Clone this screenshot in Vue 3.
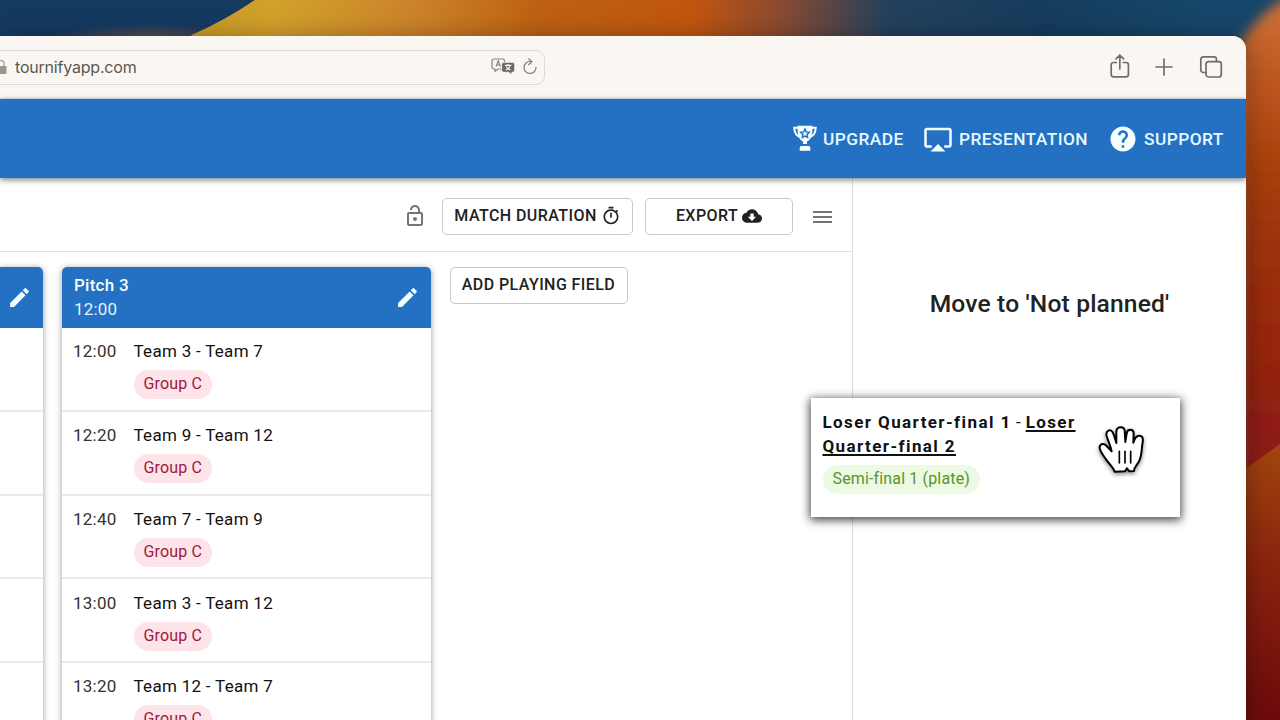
<script setup>
const matches = [
  { time: '12:00', teams: 'Team 3 - Team 7' },
  { time: '12:20', teams: 'Team 9 - Team 12' },
  { time: '12:40', teams: 'Team 7 - Team 9' },
  { time: '13:00', teams: 'Team 3 - Team 12' },
  { time: '13:20', teams: 'Team 12 - Team 7' },
]
const pencil = 'M3 17.25V21h3.75L17.81 9.94l-3.75-3.75L3 17.25zM20.71 7.04c.39-.39.39-1.02 0-1.41l-2.34-2.34c-.39-.39-1.02-.39-1.41 0l-1.83 1.83 3.75 3.75 1.83-1.83z'
</script>

<template>
  <div class="desktop">
    <svg class="wallpaper" viewBox="0 0 1280 720" width="1280" height="720" aria-hidden="true">
      <defs>
        <linearGradient id="top" x1="190" x2="1280" y1="0" y2="0" gradientUnits="userSpaceOnUse">
          <stop offset="0" stop-color="#c99a25" />
          <stop offset=".08" stop-color="#d2a02b" />
          <stop offset=".2" stop-color="#cc842a" />
          <stop offset=".32" stop-color="#bd6112" />
          <stop offset=".46" stop-color="#c0560f" />
          <stop offset=".54" stop-color="#8b4a30" />
          <stop offset=".64" stop-color="#24405c" />
          <stop offset=".78" stop-color="#153c5c" />
          <stop offset=".93" stop-color="#17466a" />
          <stop offset="1" stop-color="#17466a" />
        </linearGradient>
        <linearGradient id="side" x1="0" x2="0" y1="0" y2="1">
          <stop offset="0" stop-color="#cf7438" />
          <stop offset=".12" stop-color="#bd5722" />
          <stop offset=".25" stop-color="#a63d08" />
          <stop offset=".4" stop-color="#9a2c0b" />
          <stop offset=".62" stop-color="#8c1b15" />
        </linearGradient>
        <linearGradient id="low" x1="0" x2="0" y1="0" y2="1">
          <stop offset="0" stop-color="#a0460f" />
          <stop offset=".4" stop-color="#8c260e" />
          <stop offset="1" stop-color="#6b0a0b" />
        </linearGradient>
        <radialGradient id="glow"><stop offset="0" stop-color="#8a5a45" stop-opacity=".7" /><stop offset="1" stop-color="#8a5a45" stop-opacity="0" /></radialGradient>
        <filter id="soft"><feGaussianBlur stdDeviation="6" /></filter>
      </defs>
      <rect width="1280" height="60" fill="url(#top)" />
      <path d="M0 0H255Q226 20 192 35L170 60H0Z" fill="#153a60" />
      <ellipse cx="150" cy="40" rx="100" ry="16" fill="url(#glow)" />
      <path d="M255 0Q226 20 192 35L170 60H300V0Z" fill="url(#top)" />
      <path d="M1300 -10Q1262 8 1238 46V740H1300Z" fill="url(#side)" filter="url(#soft)" />
      <path d="M1246 468.500L1280 444V720H1246Z" fill="url(#low)" />
    </svg>

    <div class="window">
      <div class="browser">
        <div class="address">
          <svg class="lock" width="12" height="18" viewBox="0 0 12 18"><path d="M3 8V5.500a3 3 0 0 1 6 0V8" fill="none" stroke="#aaa7a2" stroke-width="1.400" /><rect x="1" y="8" width="10.500" height="8" rx="1.300" fill="#99958f" /></svg>
          <span class="host">tournifyapp.com</span>
          <svg class="translate" width="24" height="18" viewBox="0 0 24 18">
            <path d="M3 1h8.500a2 2 0 0 1 2 2v6a2 2 0 0 1-2 2H7l-3 2.300V11H3a2 2 0 0 1-2-2V3a2 2 0 0 1 2-2Z" fill="none" stroke="#85817b" stroke-width="1.200" />
            <path d="m5 8.600 2.200-5.600 2.200 5.600M5.700 7h3" fill="none" stroke="#85817b" stroke-width="1.200" />
            <path d="M12.800 4.300h8.700a2.200 2.200 0 0 1 2.200 2.200v5.600a2.200 2.200 0 0 1-2.200 2.200h-.7v2.600l-3-2.600h-5a2.200 2.200 0 0 1-2.200-2.200V6.500a2.200 2.200 0 0 1 2.200-2.200Z" fill="#6d6963" stroke="#faf7f2" stroke-width=".8" />
            <path d="M14 7.400h6.500M17.200 6v1.400M15 12q3.700-1.800 4.200-4.500M15.300 8.500q1 2.500 4.200 3.600" fill="none" stroke="#faf7f2" stroke-width="1.100" />
          </svg>
          <svg class="reload" width="16" height="18" viewBox="0 0 16 18"><path d="M8.500 3.500A6 6 0 1 0 14 9.400M6.700.8l3.200 2.900-3.300 3" fill="none" stroke="#85817b" stroke-width="1.250" stroke-linecap="round" /></svg>
        </div>
        <div class="tools">
          <svg width="22" height="26" viewBox="0 0 22 26"><path d="M7.300 9.500H4.500a2.300 2.300 0 0 0-2.300 2.300v9.700a2.300 2.300 0 0 0 2.300 2.300h12.600a2.300 2.300 0 0 0 2.300-2.300v-9.700a2.300 2.300 0 0 0-2.300-2.300h-2.800M10.800 16V2.200M7 5.800l3.800-3.700 3.800 3.700" /></svg>
          <svg width="18" height="18" viewBox="0 0 18 18"><path d="M9 1v16M1 9h16" /></svg>
          <svg width="24" height="24" viewBox="0 0 24 24"><path d="M7 17.500H4.300A2.500 2.500 0 0 1 1.800 15V4.300a2.500 2.500 0 0 1 2.500-2.500H15a2.500 2.500 0 0 1 2.500 2.500V6.500" /><rect x="7" y="6.700" width="15.300" height="15.300" rx="2.500" /></svg>
        </div>
      </div>

      <header class="appbar">
        <a class="nav upgrade">
          <svg width="24" height="27" viewBox="0 0 24 27">
            <path d="M5.500 2.800H1.200Q1.700 11.200 8 12.200M18.500 2.800h4.300Q22.300 11.200 16 12.200" fill="none" stroke="currentColor" stroke-width="2" />
            <path d="M4.500.8h15Q20 14.500 14 16.500V19h-4v-2.500Q4 14.500 4.500.8ZM8.300 21h7.400q1.600 0 1.600 1.600v3.200H6.700v-3.200Q6.700 21 8.300 21Z" fill="currentColor" />
            <path d="m12 4.200 1.300 2.700 3 .4-2.200 2.100.5 3-2.600-1.400-2.600 1.400.5-3-2.200-2.100 3-.4Z" fill="none" stroke="#2470c3" stroke-width="1.500" />
          </svg><span>UPGRADE</span>
        </a>
        <a class="nav presentation">
          <svg width="30" height="30" viewBox="0 0 24 24"><path fill="currentColor" d="M6 22h12l-6-6zM21 3H3c-1.100 0-2 .9-2 2v12c0 1.100.9 2 2 2h4v-2H3V5h18v12h-4v2h4c1.100 0 2-.9 2-2V5c0-1.100-.9-2-2-2z" /></svg><span>PRESENTATION</span>
        </a>
        <a class="nav support">
          <svg width="30" height="30" viewBox="0 0 24 24"><path fill="currentColor" d="M12 2C6.480 2 2 6.480 2 12s4.480 10 10 10 10-4.480 10-10S17.520 2 12 2zm1 17h-2v-2h2v2zm2.070-7.750l-.9.920C13.450 12.900 13 13.500 13 15h-2v-.5c0-1.100.45-2.100 1.170-2.830l1.240-1.260c.37-.36.59-.86.59-1.410 0-1.100-.9-2-2-2s-2 .9-2 2H8c0-2.210 1.790-4 4-4s4 1.790 4 4c0 .88-.36 1.680-.93 2.250z" /></svg><span>SUPPORT</span>
        </a>
      </header>

      <main class="content">
        <section class="board">
          <div class="toolbar">
            <svg class="unlock" width="24" height="24" viewBox="0 0 24 24"><path fill="#757575" d="M12 17c1.100 0 2-.9 2-2s-.9-2-2-2-2 .9-2 2 .9 2 2 2zm6-9h-1V6c0-2.760-2.240-5-5-5S7 3.240 7 6h1.900c0-1.710 1.390-3.100 3.100-3.100s3.100 1.390 3.100 3.100v2H6c-1.100 0-2 .9-2 2v10c0 1.100.9 2 2 2h12c1.100 0 2-.9 2-2V10c0-1.100-.9-2-2-2zm0 12H6V10h12v10z" /></svg>
            <button class="btn duration"><span>MATCH DURATION</span><svg width="20" height="20" viewBox="0 0 24 24"><path fill="currentColor" d="M15 1H9v2h6V1zm-4 13h2V8h-2v6zm8.030-6.610l1.420-1.420c-.43-.51-.9-.99-1.410-1.410l-1.420 1.420C16.070 4.740 14.120 4 12 4c-4.970 0-9 4.030-9 9s4.020 9 9 9 9-4.030 9-9c0-2.120-.74-4.070-1.970-5.610zM12 20c-3.870 0-7-3.130-7-7s3.130-7 7-7 7 3.130 7 7-3.130 7-7 7z" /></svg></button>
            <button class="btn export"><span>EXPORT</span><svg width="20" height="20" viewBox="0 0 24 24"><path fill="currentColor" d="M19.350 10.040C18.670 6.590 15.640 4 12 4 9.110 4 6.600 5.640 5.350 8.040 2.340 8.360 0 10.910 0 14c0 3.310 2.690 6 6 6h13c2.760 0 5-2.240 5-5 0-2.640-2.050-4.780-4.650-4.960zM17 13l-5 5-5-5h3V9h4v4h3z" /></svg></button>
            <svg class="menu" width="19" height="14" viewBox="0 0 19 14"><path d="M0 2h19M0 7h19M0 12h19" stroke="#757575" stroke-width="1.800" /></svg>
          </div>
          <div class="fields">
            <article class="field partial">
              <div class="field-head"><svg class="edit" width="25" height="25" viewBox="0 0 24 24"><path fill="currentColor" :d="pencil" /></svg></div>
              <div v-for="m in matches" :key="m.time" class="match"></div>
            </article>
            <article class="field">
              <div class="field-head">
                <div><div class="pitch">Pitch 3</div><div class="start">12:00</div></div>
                <svg class="edit" width="25" height="25" viewBox="0 0 24 24"><path fill="currentColor" :d="pencil" /></svg>
              </div>
              <div v-for="m in matches" :key="m.time" class="match">
                <div class="time">{{ m.time }}</div>
                <div><div class="teams">{{ m.teams }}</div><span class="chip group">Group C</span></div>
              </div>
            </article>
            <button class="btn add"><span>ADD PLAYING FIELD</span></button>
          </div>
        </section>
        <aside class="unplanned">Move to 'Not planned'</aside>
      </main>
    </div>

    <div class="drag">
      <div class="line"><b>Loser Quarter-final 1</b><i> - </i><b><u>Loser</u></b></div>
      <div class="line"><b><u>Quarter-final 2</u></b></div>
      <span class="chip semi">Semi-final 1 (plate)</span>
    </div>
    <svg class="hand" width="80" height="80" viewBox="0 0 240 240">
      <path d="M104 185C100 172 86 160 78 148C70 136 57 122 59 110C62 100 73 99 80 108L95 124C92 108 84 92 80 78C76 62 91 54 98 67C103 76 106 90 109 99L109 66C109 48 133 47 134 62L136 96L140 70C142 55 161 56 161 70L160 98C163 88 167 80 174 78C187 75 190 84 188 96C184 120 186 136 178 152C172 166 162 170 162 183L148 184L141 175L135 184Z" fill="#fff" stroke="#000" stroke-width="6" stroke-linejoin="round" />
      <path d="M118 124v35M135 124v35M152 124v35" stroke="#000" stroke-width="5" stroke-linecap="round" />
    </svg>
  </div>
</template>

<style>
body { margin: 0; overflow: hidden; }
</style>

<style scoped>
.desktop { display: flow-root; position: relative; width: 1280px; height: 720px; overflow: hidden; font-family: Roboto, "Liberation Sans", sans-serif; color: #212121; }
.desktop * { box-sizing: border-box; }
svg { display: block; flex: none; }
.wallpaper { position: absolute; inset: 0; }
.window { position: relative; width: 1246px; height: 684.500px; margin-top: 35.500px; background: #fff; border-top-right-radius: 14px; overflow: hidden; box-shadow: 0 2px 24px rgba(0, 0, 0, .35); display: flex; flex-direction: column; }
.browser { height: 63.500px; flex: none; background: #faf7f2; display: flex; align-items: center; justify-content: space-between; border-bottom: 1px solid #d9e3ea; }
.address { margin-left: -12px; width: 557px; height: 35px; margin-top: 1px; border: 1.500px solid #dedbd6; border-radius: 9px; display: flex; align-items: center; padding-left: 6px; }
.host { font-family: Inter, Roboto, sans-serif; font-size: 16px; letter-spacing: -.2px; color: #5b5853; margin-left: 8px; white-space: nowrap; }
.translate { margin-left: auto; }
.reload { margin-left: 7px; margin-right: 6px; }
.tools { display: flex; align-items: center; margin-right: 23px; }
.tools svg { fill: none; stroke: #716d67; stroke-width: 1.700; stroke-linecap: round; stroke-linejoin: round; }
.tools svg + svg { margin-left: 25px; }
.tools svg:first-child { margin-top: -2px; margin-right: -.5px; }
.tools svg:last-child { margin-left: 26px; }
.appbar { position: relative; z-index: 1; flex: none; height: 79px; background: #2470c3; box-shadow: 0 2px 6px rgba(30, 50, 60, .6); display: flex; justify-content: flex-end; align-items: center; padding-right: 22px; color: #f4ffff; }
.nav { display: flex; align-items: center; font-weight: 500; font-size: 17.300px; letter-spacing: .45px; white-space: nowrap; height: 30px; }
.nav span { color: #e4faff; }
.upgrade span { margin-left: 6px; width: 81px; }
.presentation { margin-left: 19px; }
.presentation span { margin-left: 6px; width: 129px; }
.support { margin-left: 20px; }
.support span { margin-left: 6px; width: 80px; }
.content { flex: 1; display: flex; min-height: 0; }
.board { width: 853px; border-right: 1px solid #dcdcdc; overflow: hidden; }
.toolbar { height: 74px; border-bottom: 1.500px solid #e2e2e2; display: flex; align-items: center; justify-content: flex-end; padding: 3px 20px 0 0; }
.unlock { margin-right: 15px; }
.btn { font: 500 16px Roboto, sans-serif; letter-spacing: .43px; color: #212121; height: 37px; background: #fff; border: 1.500px solid #c8c8c8; border-radius: 5px; display: flex; align-items: center; justify-content: center; padding: 0 0 1px; white-space: nowrap; flex: none; }
.btn svg { margin-left: 4px; }
.duration { width: 191px; margin-right: 12px; }
.export { width: 148px; margin-right: 20px; }
.add { width: 178px; margin-left: -.5px; }
.menu { margin-top: 2px; }
.fields { display: flex; align-items: flex-start; padding-top: 14.500px; gap: 19px; height: 480px; }
.field { width: 369px; flex: none; background: #fff; border-radius: 5px 5px 0 0; box-shadow: 0 1px 6px rgba(0, 0, 0, .4); }
.partial { width: 43px; }
.field-head { height: 61.800px; background: #2470c3; border-radius: 5px 5px 0 0; color: #f4ffff; display: flex; align-items: center; justify-content: space-between; padding: 0 11px 0 12px; font-size: 17px; line-height: 24.500px; }
.partial, .partial .field-head { border-top-left-radius: 0; }
.partial .field-head { justify-content: flex-end; }
.pitch { font-weight: 500; letter-spacing: .25px; }
.start { letter-spacing: .2px; color: #e1f4fb; }
.match { height: 83.700px; border-bottom: 2px solid #e9e9e9; padding: 11.200px 11px 0; display: flex; font-size: 17px; line-height: 24px; }
.time { width: 60.500px; color: #333; letter-spacing: .25px; }
.teams { letter-spacing: .29px; color: #111; }
.chip { display: block; width: max-content; border-radius: 15px; height: 29px; line-height: 28px; font-size: 16px; letter-spacing: .15px; white-space: nowrap; }
.group { color: #a3173f; background: #fce4e8; padding: 0 10px; margin-top: 7px; }
.unplanned { flex: 1; display: flex; justify-content: center; padding-top: 108.500px; font-size: 24.600px; line-height: 34px; font-weight: 500; letter-spacing: .16px; color: #222; }
.drag { position: absolute; left: 811px; top: 398px; width: 369px; height: 119px; background: #fff; box-shadow: 0 2px 9px 1px rgba(0, 0, 0, .75); padding: 12px 12px 0; color: #111; }
.line { font-size: 17px; line-height: 24.300px; letter-spacing: 1.400px; white-space: pre; margin-left: -.5px; }
.line b { font-weight: 700; }
.line i { font-style: normal; letter-spacing: .3px; }
.line u { text-underline-offset: 2px; text-decoration-thickness: 1.500px; }
.semi { color: #57952b; background: #ecf9e3; padding: 0 10px; margin-top: 6.900px; margin-left: -.5px; }
.hand { position: absolute; left: 1080px; top: 410px; filter: drop-shadow(0 2px 2px rgba(0, 0, 0, .45)); }
</style>
